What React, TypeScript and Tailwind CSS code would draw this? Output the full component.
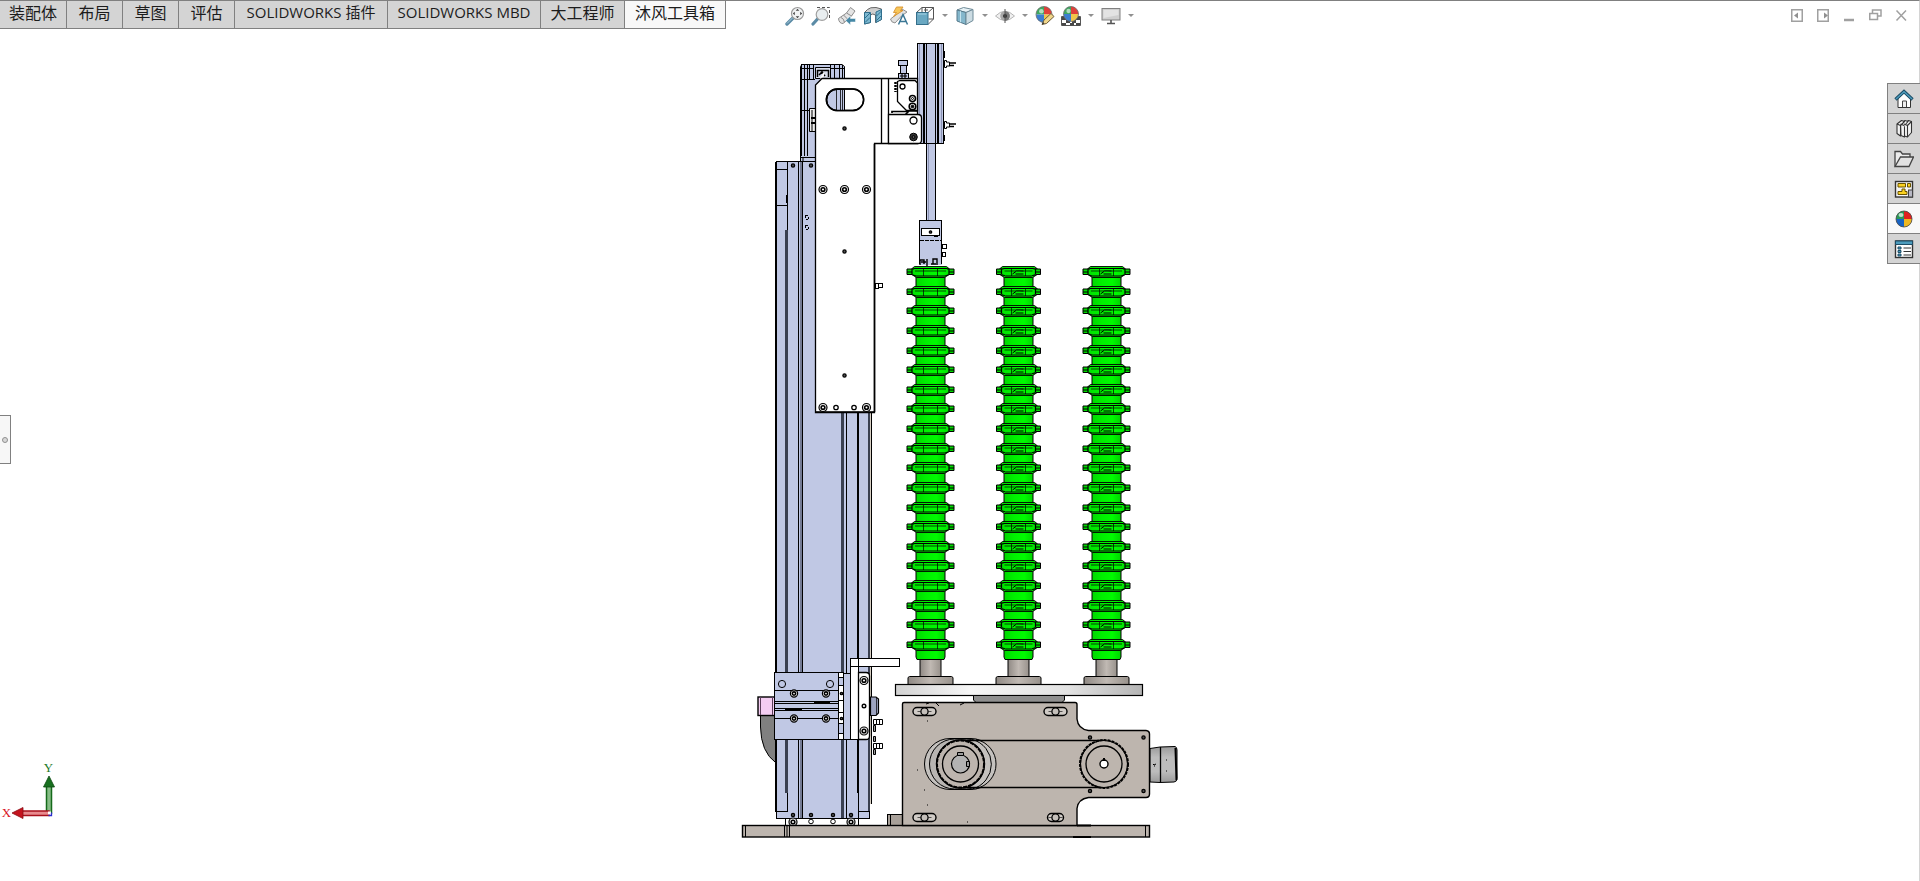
import { useState, type ReactNode } from "react";
import clsx from "clsx";

const BLUE = "#c0c8e4";
const STONE = "#bdb5ae";
const GREEN = "#00f000";

const TABS = [
  { label: "装配体", width: "w-[67px]" },
  { label: "布局", width: "w-14" },
  { label: "草图", width: "w-14" },
  { label: "评估", width: "w-14" },
  { label: "SOLIDWORKS 插件", width: "w-[153px] text-[15px]" },
  { label: "SOLIDWORKS MBD", width: "w-[153px] text-[15px]" },
  { label: "大工程师", width: "w-[84px]" },
  { label: "沐风工具箱", width: "w-[101px]" },
];

function Icon({ children, size = 20 }: { children: ReactNode; size?: number }) {
  return (
    <svg width={size} height={size} viewBox={`0 0 ${size} ${size}`} fill="none" aria-hidden="true">
      {children}
    </svg>
  );
}

/* Four coloured quarters used by every appearance icon */
function ColorBall({ cx, cy, r }: { cx: number; cy: number; r: number }) {
  return (
    <g>
      <path d={`M${cx} ${cy}V${cy - r}A${r} ${r} 0 0 0 ${cx - r} ${cy}Z`} fill="#3fa860" />
      <path d={`M${cx} ${cy}V${cy - r}A${r} ${r} 0 0 1 ${cx + r} ${cy}Z`} fill="#e0403a" />
      <path d={`M${cx} ${cy}H${cx - r}A${r} ${r} 0 0 0 ${cx} ${cy + r}Z`} fill="#3c7fd0" />
      <path d={`M${cx} ${cy}H${cx + r}A${r} ${r} 0 0 1 ${cx} ${cy + r}Z`} fill="#f0c64a" />
      <circle cx={cx} cy={cy} r={r} stroke="#6b6b6b" strokeWidth="0.8" />
      <circle cx={cx - r / 3} cy={cy - r / 2.5} r={r / 3.5} fill="#fff" opacity="0.6" />
    </g>
  );
}

const TOOLS: { name: string; menu?: boolean; icon: ReactNode }[] = [
  {
    name: "整屏显示全图",
    icon: (
      <>
        <path d="M8.5 11.5L2 18" stroke="#5b8ba6" strokeWidth="3.4" strokeLinecap="round" />
        <path d="M8 11.5L2 17.5" stroke="#a9cbdc" strokeWidth="1" />
        <circle cx="12.5" cy="7.5" r="6" fill="#f1f3f4" stroke="#9a9a9a" strokeWidth="1.2" />
        <path d="M12.5 2.8l1.8 2h-3.6zM12.5 12.2l1.8-2h-3.6zM7.8 7.5l2-1.8v3.6zM17.2 7.5l-2-1.8v3.6z" fill="#444" />
      </>
    ),
  },
  {
    name: "局部放大",
    icon: (
      <>
        <path d="M6 1.5H18.5V14" stroke="#555" strokeDasharray="3 2" />
        <path d="M7 12.5L2 18" stroke="#5b8ba6" strokeWidth="3.2" strokeLinecap="round" />
        <circle cx="11" cy="8.5" r="5.8" fill="#e9eef0" stroke="#a0a0a0" strokeWidth="1.2" />
      </>
    ),
  },
  {
    name: "上一视图",
    icon: (
      <>
        <path d="M1.500 12.500L9.500 7L13.500 1.500L18 5L14.500 10L6 17.500Q2 17.500 1.500 12.500Z" fill="#e4e4e4" stroke="#8c8c8c" />
        <path d="M9.500 7L14.500 10M6.500 9L10.500 13M4 11.500q3 1 3.500 5" stroke="#8c8c8c" />
        <path d="M8.500 14.500L13.500 10V12.500H18.500V16H13.500V19Z" fill="#4588a6" stroke="#fff" strokeWidth="0.500" />
      </>
    ),
  },
  {
    name: "剖面视图",
    icon: (
      <>
        <path d="M1.500 6.500V18L7.500 16.500V9Q9.500 7 12.500 9V16.500L18.500 13.500V3L13 1.500Q7 1 4.500 3.500Z" fill="#cfcfcf" stroke="#666" />
        <path d="M1.500 6.500H7.500V16.500L1.500 18ZM13 6L18.500 3.500V13.500L13 16.500Z" fill="#7db8d0" stroke="#2f6f8e" />
        <path d="M2 12l5-5M2 16.500l5-5M13.500 10l5-5M13.500 14.500l5-5" stroke="#2f6f8e" />
      </>
    ),
  },
  {
    name: "动态注解视图",
    icon: (
      <>
        <path d="M1.500 13L8 8L13 3L18 6L12.500 10L6 17Q2 16.500 1.500 13Z" fill="#e2e2e2" stroke="#909090" />
        <path d="M7.500 1H14L11.500 4.500H14L4.500 10.500L7.500 6.500H4.500Z" fill="#f7c65a" stroke="#d99330" strokeWidth="0.900" />
        <path d="M9.500 18.500L14 8.500L18.500 18.500M11 15.500H17" stroke="#3b7795" strokeWidth="1.500" />
      </>
    ),
  },
  {
    name: "视图定向",
    menu: true,
    icon: (
      <>
        <path d="M1.500 6.500L7 1.500H18.500V13L13 18.500" stroke="#555" />
        <path d="M13 6.500L18.500 1.500M7 1.500V6M10.500 1v5M13.500 13H18.500M9 4h4" stroke="#555" />
        <rect x="1.500" y="6.500" width="11.500" height="12" fill="#6aa8c2" stroke="#356f8b" />
        <path d="M3 8h8.500" stroke="#a7d5e6" />
      </>
    ),
  },
  {
    name: "显示样式",
    menu: true,
    icon: (
      <>
        <path d="M2 4L8.500 1.500L18 3.500L11 6.500Z" fill="#e7f2f6" stroke="#6f8b98" />
        <path d="M2 4L11 6.500V18.500L2 15Z" fill="#84b7cc" stroke="#56798a" />
        <path d="M11 6.500L18 3.500V14.500L11 18.500Z" fill="#ccdce3" stroke="#6f8b98" />
        <path d="M5.500 5.200V16.300" stroke="#c5e3ee" />
      </>
    ),
  },
  {
    name: "隐藏/显示项目",
    menu: true,
    icon: (
      <>
        <path d="M.5 10Q10 .5 19.500 10Q10 19 .5 10Z" fill="#f0f0f0" stroke="#b4b4b4" />
        <circle cx="10" cy="10" r="4.800" fill="#a8a8a8" />
        <path d="M10 5.200A4.800 4.800 0 0 1 10 14.800Z" fill="#7a7a7a" />
        <circle cx="10" cy="10" r="2" fill="#303030" />
        <path d="M10 3V17" stroke="#555" />
      </>
    ),
  },
  {
    name: "编辑外观",
    icon: (
      <>
        <ColorBall cx={9} cy={8.5} r={8} />
        <path d="M7 18.500L9 14L16 7.500L19 10.500L11.500 17.500Z" fill="#f0d68a" stroke="#6f5c38" />
        <path d="M7 18.500l1-2.500 1.500 1.500z" fill="#333" />
      </>
    ),
  },
  {
    name: "应用布景",
    menu: true,
    icon: (
      <>
        <path d="M.5 10.500H19.500V19.500H.5Z" fill="#fff" stroke="#555" />
        <path d="M1 11h4v3H1zM5 14h4v3H5zM9 17h4v2.500H9zM15 11h4v3h-4zM11 14h4v3h-4zM1 17h4v2.500H1zM15 17h4v2.500h-4z" fill="#484848" />
        <ColorBall cx={10} cy={8} r={7.5} />
      </>
    ),
  },
  {
    name: "视图设置",
    menu: true,
    icon: (
      <>
        <rect x="1" y="2.500" width="18" height="11.500" fill="#cfcfcf" stroke="#808080" />
        <path d="M2.500 4h15v5L2.500 12z" fill="#e3e3e3" />
        <path d="M10 14v3.500M6 17.500h8" stroke="#555" strokeWidth="1.600" />
      </>
    ),
  },
];

const PANES: { name: string; icon: ReactNode }[] = [
  {
    name: "SOLIDWORKS 资源",
    icon: (
      <>
        <path d="M4 9.500V18.500H16.500V9.500L10 4Z" fill="#fff" stroke="#333" />
        <path d="M8.500 18V12H12.500V18" fill="#eee" stroke="#444" />
        <path d="M1.500 10.500L10 2.500L18.500 10.500" stroke="#1d4d66" strokeWidth="3.400" />
        <path d="M2 10L10 2.700L18 10" stroke="#4d9cbd" strokeWidth="1.400" />
      </>
    ),
  },
  {
    name: "设计库",
    icon: (
      <g stroke="#333" fill="#f4f4f4" strokeWidth="1.100" strokeLinejoin="round">
        <path d="M10 5L14.500 1.500L17.500 2.500V13.500L13.500 18L10.500 17Z" />
        <path d="M6.500 5L11 1.500L14 2.500L10.500 6.500V18L7 16.500Z" />
        <path d="M3 5L7.500 1.500L10.500 2.500L6.500 6.500V17L3 14.500Z" />
        <path d="M3 5L6.500 6.500M6.500 5L10 6.500M10 5L13.500 6.500V18M13.500 6.500L17.500 2.500" />
      </g>
    ),
  },
  {
    name: "文件探索器",
    icon: (
      <>
        <path d="M1 17.500V2.500H6.500L8.500 5H16V8" fill="#ececec" stroke="#444" strokeWidth="1.300" />
        <path d="M1 17.500L6.500 8H19.500L15 17.500Z" fill="#e2e2e2" stroke="#444" strokeWidth="1.300" />
      </>
    ),
  },
  {
    name: "视图调色板",
    icon: (
      <>
        <rect x="1.500" y="2.500" width="17" height="15.500" fill="#f5f5f5" stroke="#333" strokeWidth="1.400" />
        <path d="M4 4.500H11.500V8H4ZM13.500 4.500H16.500V8H13.500ZM8 10H11V12.500H13V15.500H4V12.500H8Z" fill="#fbd220" stroke="#6b5400" />
        <rect x="14.500" y="11" width="4" height="7" fill="#b8b8c4" stroke="#444" />
      </>
    ),
  },
  {
    name: "外观、布景和贴图",
    icon: (
      <>
        <path d="M10 10V2A8 8 0 0 0 2 10Z" fill="#2a9a58" />
        <path d="M10 10V2A8 8 0 0 1 18 10Z" fill="#e02020" />
        <path d="M10 10H2A8 8 0 0 0 10 18Z" fill="#1763c4" />
        <path d="M10 10H18A8 8 0 0 1 10 18Z" fill="#efb820" />
        <circle cx="10" cy="10" r="8" stroke="#444" strokeWidth="0.800" />
        <ellipse cx="7" cy="6" rx="2.500" ry="2" fill="#fff" opacity="0.700" />
      </>
    ),
  },
  {
    name: "自定义属性",
    icon: (
      <>
        <rect x="1.500" y="2" width="17" height="16.500" fill="#fff" stroke="#333" strokeWidth="1.400" />
        <path d="M1.500 2H18.500V5.500H1.500Z" fill="#4d9cbd" stroke="#1d4d66" />
        <path d="M4 8h3v2H4zM4 11.500h3v2H4zM4 15h3v2H4z" fill="#4d9cbd" stroke="#1d4d66" />
        <path d="M9.500 9H17M9.500 12.500H17M9.500 16H17" stroke="#333" />
      </>
    ),
  },
];

const WINDOW_BUTTONS: { name: string; icon: ReactNode }[] = [
  { name: "左侧窗格", icon: <><path d="M.75 .75H11.250V12.250H.75Z" /><path d="M7 3.500V9.500L3 6.500Z" fill="#909090" stroke="none" /></> },
  { name: "右侧窗格", icon: <><path d="M.75 .75H11.250V12.250H.75Z" /><path d="M7 3.500V9.500L11 6.500Z" fill="#909090" stroke="none" /></> },
  { name: "最小化", icon: <path d="M1 11H11" strokeWidth="2.500" /> },
  { name: "还原", icon: <><path d="M3.500 4V1H12V7H9" /><path d="M.75 4.500H8.500V10.500H.75Z" /></> },
  { name: "关闭", icon: <path d="M1.500 1.500L11 11.500M11 1.500L1.500 11.500" /> },
];

function Screw({ x, y, r = 4 }: { x: number; y: number; r?: number }) {
  return (
    <g>
      <circle cx={x} cy={y} r={r} fill="#eee" strokeWidth="1.200" />
      <circle cx={x} cy={y} r={r / 2.2} fill="#fff" strokeWidth="1.600" />
    </g>
  );
}

function Pin({ x, y, r = 1.6 }: { x: number; y: number; r?: number }) {
  return <circle cx={x} cy={y} r={r} fill="#555" strokeWidth="1.300" />;
}

/* One insulator string: 20 sheds with a sleeve between each pair */
function Stack({ cx, half, hub }: { cx: number; half: number; hub?: boolean }) {
  const sheds = Array.from({ length: 20 }, (_, i) => Math.round(272 + i * 19.63));
  return (
    <g fill="url(#green)">
      <path d={`M${cx - 14.5} 268H${cx + 14.5}V657L${cx + 13.5} 659.500H${cx - 13.5}L${cx - 14.5} 657Z`} />
      {sheds.map((y) => (
        <g key={y}>
          <path d={`M${cx - 16} ${y - 5.5}H${cx + 16}L${cx + 19} ${y - 3}H${cx - 19}Z`} strokeWidth="0.900" />
          <path d={`M${cx - 18} ${y + 3}H${cx + 18}L${cx + 14} ${y + 5.5}H${cx - 14}Z`} strokeWidth="0.900" />
          <path
            d={`M${cx - half} ${y - 3}H${cx - half + 7}V${y - 3.5}H${cx + half - 7}V${y - 3}H${cx + half}V${y + 2.5}H${cx + half - 5}L${cx + half - 9} ${y + 4}H${cx - half + 9}L${cx - half + 5} ${y + 2.5}H${cx - half}Z`}
          />
          <path
            d={`M${cx - half} ${y}H${cx - half + 5}M${cx + half} ${y}H${cx + half - 5}M${cx - half + 5} ${y - 3}V${y + 2}M${cx + half - 5} ${y - 3}V${y + 2}`}
            strokeWidth="1.200"
          />
          <path d={`M${cx - half + 8} ${y - 1}H${cx + half - 8}`} strokeWidth="0.700" />
          <path d={`M${cx - 7} ${y - 3}V${y + 4}M${cx + 7} ${y - 3}V${y + 4}`} strokeWidth="0.700" />
          {hub && <path d={`M${cx - 6} ${y + 2}L${cx - 2} ${y - 1}H${cx + 5}M${cx - 3} ${y + 2}H${cx + 5}`} strokeWidth="1" />}
        </g>
      ))}
    </g>
  );
}

function Pedestal({ cx }: { cx: number }) {
  return (
    <g fill="url(#post)">
      <rect x={cx - 10.5} y="659.5" width="21" height="18" />
      <path d={`M${cx - 22.5} 677.5L${cx - 21} 676.500H${cx + 21}L${cx + 22.5} 677.500V684.500H${cx - 22.5}Z`} />
    </g>
  );
}

function Slot({ cx, cy, w }: { cx: number; cy: number; w: number }) {
  return (
    <g>
      <rect x={cx - w / 2} y={cy - 4} width={w} height="8" rx="4" fill="#d0cbc6" strokeWidth="1.400" />
      <circle cx={cx} cy={cy} r="3.6" fill="#c4bfba" strokeWidth="1.300" />
      <path d={`M${cx - 7} ${cy}H${cx - 4}M${cx + 4} ${cy}H${cx + 7}`} strokeWidth="0.600" />
    </g>
  );
}

function Machine() {
  return (
    <svg className="block h-[811px] w-[440px]" viewBox="740 30 440 811" fill="none" stroke="#000" role="img" aria-label="装配体模型">
      <defs>
        <linearGradient id="green">
          <stop offset="0" stopColor="#00d800" />
          <stop offset="0.35" stopColor={GREEN} />
          <stop offset="0.7" stopColor="#00fa00" />
          <stop offset="1" stopColor="#00d400" />
        </linearGradient>
        <linearGradient id="post">
          <stop offset="0" stopColor="#8f8984" />
          <stop offset="0.5" stopColor="#c0b9b3" />
          <stop offset="1" stopColor="#98928c" />
        </linearGradient>
        <linearGradient id="disk">
          <stop offset="0" stopColor="#d2d2d2" />
          <stop offset="0.3" stopColor="#f6f6f6" />
          <stop offset="0.7" stopColor="#e2e2e2" />
          <stop offset="1" stopColor="#b4b4b4" />
        </linearGradient>
        <linearGradient id="motor" x2="0" y2="1">
          <stop offset="0" stopColor="#9a9a9a" />
          <stop offset="0.3" stopColor="#bcbcbc" />
          <stop offset="0.7" stopColor="#bcbcbc" />
          <stop offset="1" stopColor="#9a9a9a" />
        </linearGradient>
      </defs>

      {/* Upper carriage behind the plate */}
      <g fill={BLUE}>
        <path d="M800.500 66.500L802 64.500H842L844.500 66.500V90H819.500V161.500H800.500Z" />
        <path d="M801.500 64V156M804.500 65V156M807.500 65V156M809.500 65V80M813.500 65V80M830.500 65V79M834.500 65V79M839.500 65V79M842.500 65V79" />
        <path d="M800 79.500H815M801 110.500H815M803 161V157.500H815M800 157.500H809M800 68.500H814M831 68.500H844" />
        <path d="M815.500 67.500H830.500V78.500H815.500Z" fill="#d8dcea" />
        <path d="M817 70.500H829M817.500 70V77M828.500 70V77M819 75L822 72L825 76" strokeWidth="1.500" />
        <path d="M821 79L824 73" stroke="#fff" strokeWidth="2" />
        <path d="M809.500 108.500H815.500V131.500H809.500Z" fill="#eee" />
        <path d="M811 118H816M811 123H816" strokeWidth="2" />
        <path d="M807.500 113V128M812 110V131" />
      </g>

      {/* Vertical extrusion */}
      <g shapeRendering="crispEdges">
        <path d="M776 161.500H869V818.500H776Z" fill={BLUE} />
        <path d="M775.500 161.500V812" strokeWidth="2" />
        <path d="M776 169.500H787M776 205.500H787M787.500 162V812M776 811.500H787" />
        <path d="M786 230V793" stroke="#3a4050" strokeWidth="3" />
        <path d="M786.500 195V203" />
        <path d="M798.500 162V818M802.500 162V818" />
        <path d="M800.500 162V818" stroke="#747b94" strokeWidth="2" />
        <path d="M842.500 412V818" stroke="#3a4050" strokeWidth="3" />
        <path d="M846.500 412V818" />
        <path d="M858 412V793" strokeWidth="2" />
        <path d="M858.500 793V818" />
        <path d="M868.500 412V812" stroke="#3a4050" strokeWidth="2" />
        <path d="M870.500 412V804" stroke="#d8d0c4" />
        <path d="M871.500 412V804" />
        <path d="M858 811.500H869M869.500 811V819M776 818.500H870" />
        <path d="M785.500 819V825M858.500 819V825" />
        <path d="M805.500 215.500h3v4h-3zM802.500 218v12M805.500 225.500h3v4h-3z" strokeDasharray="2 2" />
      </g>
      <Pin x={793} y={165.500} />
      <Pin x={811} y={165.500} />
      {[793, 811, 833, 851].map((x) => (
        <Pin key={x} x={x} y={815} />
      ))}
      <Screw x={793} y={822} />
      <circle cx="811" cy="821.500" r="2.300" fill="#fff" />
      <circle cx="833" cy="821.500" r="2.300" fill="#fff" />
      <Screw x={851} y={822} />

      {/* Cylinder and rod */}
      <g shapeRendering="crispEdges" fill={BLUE}>
        <rect x="926.500" y="143.500" width="9" height="77" />
        <path d="M928.500 144V220" stroke="#8b93b4" />
        <rect x="917.500" y="43.500" width="26" height="100" />
        <path d="M923.500 44V143M938 44V143" strokeWidth="2" />
        <path d="M926.500 44V143M935.500 44V143" />
        <path d="M919.500 44V143M941.500 44V143" stroke="#8b93b4" />
        <path d="M944 51V58M944 135V141" />
      </g>
      {[64, 125].map((y) => (
        <g key={y} fill="#fff">
          <path d={`M944.500 ${y - 3.5}H946.500V${y - 2}H949.500V${y + 2}H946.500V${y + 3.5}H944.500Z`} />
          <path d={`M949 ${y - 1}H956M949 ${y + 1.5}H954`} strokeWidth="1.300" />
        </g>
      ))}

      {/* Carrier plate */}
      <path
        d="M822 78.500H917.500V143.500H874.500V412.500H815.500V85ZM837 89H853A10.750 10.750 0 0 1 853 110.500H837A10.750 10.750 0 0 1 837 89Z"
        fill="#fff"
        fillRule="evenodd"
        strokeWidth="1.300"
      />
      <path d="M844.500 89.500H837.250A10.500 10.500 0 0 0 837.250 110.500H844.500Z" fill={BLUE} />
      <path d="M836.500 90V110M840.500 90V110M842.500 90V110" strokeWidth="0.800" />
      <rect x="826.500" y="89" width="37" height="21.500" rx="10.750" strokeWidth="1.500" />
      <path d="M881.500 79V143M888.500 79V143" strokeWidth="1.300" />
      <path d="M874.500 144V412M816 412H875" strokeWidth="1.600" />
      <Pin x={844.500} y={128.500} />
      <Pin x={844.500} y={251.500} />
      <Pin x={844.500} y={375.500} />
      {[823, 844.5, 866.5].map((x) => (
        <Screw key={x} x={x} y={189.5} />
      ))}
      <Screw x={823} y={407.500} />
      <Screw x={866.500} y={407.500} />
      <circle cx="836" cy="407.500" r="2.200" strokeWidth="1.300" />
      <circle cx="854" cy="407.500" r="2.200" strokeWidth="1.300" />
      <g fill="#fff">
        <rect x="875.500" y="283.500" width="3" height="5" />
        <rect x="878.500" y="283.500" width="4" height="4" />
        <path d="M874.500 281V294" />
      </g>

      {/* Hinge bracket */}
      <g fill="#fff">
        <path d="M897.500 81.500L900 80.500H915L917.500 83V110.500H906.500L897.500 101.500Z" strokeWidth="1.300" />
        <circle cx="902.500" cy="86.500" r="2.500" strokeWidth="1.300" />
        <rect x="898.500" y="60.500" width="9" height="5" fill={BLUE} />
        <rect x="900.500" y="65.500" width="6" height="8" fill={BLUE} />
        <rect x="898.500" y="73.500" width="10" height="5" fill={BLUE} />
        <path d="M900 76H907M902 73V79M905 73V79" strokeWidth="1.200" />
        <path d="M895.500 82V92" strokeWidth="2.500" strokeDasharray="2 1" />
        <circle cx="912.500" cy="98.500" r="3" strokeWidth="1.600" />
        <circle cx="912.500" cy="98.500" r="1" />
        <circle cx="912.500" cy="106.500" r="3.300" strokeWidth="1.600" />
        <circle cx="912.500" cy="106.500" r="1.300" fill="#000" />
        <path d="M892 113V111.500H908M905 115L909 111H917" strokeWidth="1.700" />
        <path d="M888.500 114.500H918Q921.500 114.500 921.500 118V140Q921.500 143.500 918 143.500H888.500Z" strokeWidth="1.300" />
        <circle cx="913.500" cy="120.500" r="3.500" strokeWidth="1.300" />
        <circle cx="913.500" cy="137" r="3.800" fill="#333" />
        <circle cx="913.500" cy="137" r="1.500" fill="#555" />
      </g>

      {/* Gripper */}
      <g shapeRendering="crispEdges">
        <rect x="919.500" y="220.500" width="22" height="44" fill={BLUE} stroke="none" />
        <path d="M919.500 264V220.500H941.500V264" />
        <path d="M920 240.500H942M934 236.500h5" strokeDasharray="4 1" />
        <rect x="921.500" y="228.500" width="18" height="7" fill="#fff" />
        <path d="M942 244.500h4v4h-4zM942 252.500h3v4h-3z" fill="#fff" />
      </g>
      <Pin x={930.500} y={232} r={1.200} />
      <path d="M920 265V260H924V264M927 266V259M933 264V259H937V265M921 262H926M931 264H936" strokeWidth="1.400" />

      <Stack cx={930.500} half={23.500} />
      <Stack cx={1018.500} half={22} hub />
      <Stack cx={1106.500} half={23.500} hub />

      {/* Turntable */}
      <Pedestal cx={930.500} />
      <Pedestal cx={1018.500} />
      <Pedestal cx={1106.500} />
      <rect x="895.500" y="684.500" width="247" height="11" fill="url(#disk)" strokeWidth="1.200" />
      <path d="M973.500 695.500H1064.500V700L1062 702.500H976L973.500 700Z" fill="#8f8f8f" />

      {/* Base plate */}
      <g fill={STONE}>
        <rect x="887.500" y="814.500" width="16" height="11" fill="#a8a099" />
        <path d="M890.500 815V825" />
        <rect x="742.500" y="825.500" width="407" height="11.500" strokeWidth="1.400" />
        <path d="M745.500 826V837M784.500 826V837M787 826V837M789.500 826V837M1145.500 826V837" />
        <path d="M1073 837H1091M1077 825.500H1091" strokeWidth="2" />
      </g>

      {/* Drive housing */}
      <path
        d="M1150 748.500L1160 747L1175 746.500Q1177 747 1177 750V778Q1177 782 1174 782L1160 782.500L1150 782Z"
        fill="url(#motor)"
      />
      <path d="M1160.500 747V782" strokeWidth="1.300" />
      <path d="M1175.500 748L1176.500 780" strokeWidth="2" />
      <path d="M1166 760h1M1166 771h1M1153 764l1 1 2-1M1154 766h1" />
      <path
        d="M902.500 704Q902.500 702.500 904 702.500H1075Q1077 702.500 1077 704.500V719Q1078 729 1088.500 730.500H1146Q1149.500 731 1149.500 734V794Q1149.500 797.500 1146 797.500H1088.500Q1078 799 1077 808.500V825.500H902.500Z"
        fill={STONE}
        strokeWidth="1.400"
      />
      <path d="M926 704l3-1M936 703l3 3M960 705l4-2M927 721h1M917 770h1M924 790h1M927 805h1M967 822h1M1117 767h1" />
      <Slot cx={924.500} cy={711.500} w={23} />
      <Slot cx={1055.500} cy={711.500} w={23} />
      <Slot cx={924.500} cy={817.500} w={23} />
      <Slot cx={1055.500} cy={817.500} w={16} />

      <rect x="924.500" y="738.500" width="72" height="51" rx="25.500" fill="#c4c1be" />
      <rect x="929.500" y="739" width="62" height="50" rx="25" fill="#b8b5b2" />
      <path d="M961 740.500H1104V787.500H961Z" fill={STONE} stroke="none" />
      <path d="M976 739.500A25 25 0 0 1 976 788.500M972 739.500A25.500 25.500 0 0 1 972 789" fill="#c4c1be" />
      <path d="M961 740.500H1104M961 787.500H1104" strokeWidth="1.700" />
      <circle cx="960.500" cy="764" r="24" fill={STONE} strokeWidth="1.400" />
      <circle cx="960.500" cy="764" r="23.500" strokeWidth="2" strokeDasharray="4 1" />
      <circle cx="960.500" cy="764" r="18" strokeWidth="1.300" />
      <circle cx="960.500" cy="764" r="9" fill="#b3b3b3" strokeWidth="1.200" />
      <path d="M957.500 752.500h6v3h-6zM966.500 761.500h3v5h-3z" fill="#9a9a9a" />
      <circle cx="1104" cy="764" r="23.500" fill={STONE} strokeWidth="1.200" />
      <circle cx="1104" cy="764" r="24" strokeWidth="2" strokeDasharray="3 1" />
      <circle cx="1104" cy="764" r="18" strokeWidth="1.300" />
      <circle cx="1104" cy="764" r="4" fill="#fff" strokeWidth="1.400" />
      <path d="M1104 758v3" strokeWidth="2" />
      {[737.5, 791].map((y) => (
        <g key={y}>
          <Pin x={1090} y={y} />
          <Pin x={1143.500} y={y} />
        </g>
      ))}

      {/* Lower carriage */}
      <path d="M760.500 715V727Q761 752 775.500 762.500V715Z" fill="#808080" />
      <rect x="758" y="697" width="17" height="18.500" fill="#f4cdf2" strokeWidth="1.400" />
      <path d="M760.500 697V715M772.500 697V715" stroke="#5b3f5a" />
      <g shapeRendering="crispEdges">
        <rect x="774.500" y="672.500" width="65" height="67" fill={BLUE} />
        <path d="M775 690.500H839M775 718.500H839M775 701.500H839M775 703.500H839M775 708.500H839M775 710.500H839" />
        <path d="M814 702.500H830M785 709.500H802" strokeWidth="2" />
        <rect x="838.500" y="672.500" width="5" height="67" fill="#fff" />
        <path d="M839 678h4v8h-4zM839 723h4v10h-4z" fill={BLUE} stroke="none" />
        <path d="M839 677.500h4M839 685.500h4M839 700.500h4M839 712.500h4M839 723.500h4M839 733.500h4" />
        <rect x="843.500" y="673.500" width="7" height="66" fill={BLUE} />
        <rect x="850.500" y="666.500" width="8" height="73" fill="#fff" />
        <rect x="850.500" y="658.500" width="49" height="8" fill="#fff" />
        <path d="M858.500 659V667" />
      </g>
      <path d="M858.500 672.500H866Q869.500 672.500 869.500 676V736Q869.500 739.500 866 739.500H858.500Z" fill="#fff" strokeWidth="1.300" />
      <circle cx="782" cy="684" r="3.600" />
      <circle cx="830" cy="684" r="3.600" />
      {[693.5, 718.5].map((y) => (
        <g key={y}>
          <Screw x={794} y={y} r={3.600} />
          <Screw x={826} y={y} r={3.600} />
          <Pin x={841.500} y={y} r={1.200} />
        </g>
      ))}
      <Screw x={864} y={680.500} />
      <Screw x={864} y={731} />
      <circle cx="864" cy="706" r="1.800" fill="#fff" strokeWidth="1.400" />
      <path d="M870.500 697H876L878.500 699V713L876 715.500H870.500Z" fill="#9da4c0" strokeWidth="1.200" />
      <path d="M876.500 697V715" strokeWidth="0.700" />
      {[719.5, 743.5].map((y) => (
        <path key={y} d={`M873.500 ${y}h3v5h-3zM876.500 ${y}h6v5h-6zM879.500 ${y}v5`} fill="#fff" />
      ))}
      <path d="M873.500 725.500h2v6h-2zM873.500 736.500h2v5h-2zM873.500 749.500h2v5h-2z" fill="#999" />
    </svg>
  );
}

function Triad() {
  return (
    <svg className="block self-end" width="60" height="89" viewBox="0 760 60 89" fill="none" aria-label="坐标轴">
      <text x="48.500" y="772" textAnchor="middle" fontSize="13" fontFamily="Liberation Serif, serif" fill="#1d7a2a">Y</text>
      <text x="6.500" y="817" textAnchor="middle" fontSize="13" fontFamily="Liberation Serif, serif" fill="#d8141e">X</text>
      <path d="M46.500 786H51.500V813H46.500Z" fill="#86bd86" stroke="#156a1b" strokeWidth="1.500" />
      <path d="M49 776L54.500 787H43.500Z" fill="#17701f" stroke="#0d4a12" strokeWidth="0.800" />
      <path d="M22 811H49V815.500H22Z" fill="#e88a8e" stroke="#a8101c" strokeWidth="1.500" />
      <path d="M12 813L23 807.500V818.500Z" fill="#c4141f" stroke="#8c0c14" strokeWidth="0.800" />
      <path d="M48 811.500h3v3h-3z" fill="#fff" />
      <path d="M48.500 815.500H51.500V812.500" stroke="#2d2dd0" strokeWidth="1.300" />
    </svg>
  );
}

export default function App() {
  const [tab, setTab] = useState("沐风工具箱");
  const [pane, setPane] = useState("外观、布景和贴图");

  return (
    <div className="flex min-h-screen flex-col border-t border-r border-t-[#808080] border-r-[#d4d4d4] bg-white font-['Open_Sans','Noto_Sans_CJK_SC',sans-serif] text-base text-[#1c1c1c]">
      <header className="grid h-[29px] grid-cols-[1fr_auto_1fr] items-start">
        <nav className="flex">
          {TABS.map(({ label, width }) => (
            <button
              key={label}
              type="button"
              onClick={() => setTab(label)}
              className={clsx(
                "flex h-7 shrink-0 items-center justify-center border-r border-b border-[#808080] pb-1 whitespace-nowrap",
                width,
                tab === label ? "bg-[#f8f8f8]" : "bg-[#d4d4d4]",
              )}
            >
              {label}
            </button>
          ))}
        </nav>

        <div className="flex h-[29px] items-center">
          {TOOLS.map(({ name, menu, icon }) => (
            <div key={name} className="flex">
              <button type="button" aria-label={name} className="flex w-[26px] justify-center">
                <Icon>{icon}</Icon>
              </button>
              {menu && (
                <button type="button" aria-label={`${name}菜单`} className="flex w-3.5 items-center justify-center">
                  <span className="border-x-[3px] border-t-[3px] border-x-transparent border-t-[#909090]" />
                </button>
              )}
            </div>
          ))}
        </div>

        <div className="flex justify-end pt-2 pr-[5px]">
          {WINDOW_BUTTONS.map(({ name, icon }) => (
            <button key={name} type="button" aria-label={name} className="flex w-[26px] justify-center">
              <svg width="13" height="14" viewBox="0 0 13 14" fill="none" stroke="#a0a0a0" strokeWidth="1.500">
                {icon}
              </svg>
            </button>
          ))}
        </div>
      </header>

      <main className="grid flex-1 grid-cols-[1fr_auto_1fr]">
        <div className="grid grid-rows-[1fr_auto_1fr] pb-8">
          <span />
          <button
            type="button"
            aria-label="展开设计树"
            className="flex h-[49px] w-[11px] items-center justify-center border border-l-0 border-[#808080] bg-[#f7f7f7]"
          >
            <span className="size-1.5 rounded-full border border-[#909090] bg-[#d8d8d8]" />
          </button>
          <Triad />
        </div>

        <Machine />

        <aside className="mt-[53px] -mr-px flex w-[33px] flex-col self-start justify-self-end border-t border-l border-[#808080]">
          {PANES.map(({ name, icon }) => (
            <button
              key={name}
              type="button"
              aria-label={name}
              onClick={() => setPane(name)}
              className={clsx(
                "flex h-[30px] items-center justify-center border-b border-[#808080]",
                pane === name ? "bg-[#f8f8f8]" : "bg-[#d4d4d4]",
              )}
            >
              <Icon>{icon}</Icon>
            </button>
          ))}
        </aside>
      </main>
    </div>
  );
}
